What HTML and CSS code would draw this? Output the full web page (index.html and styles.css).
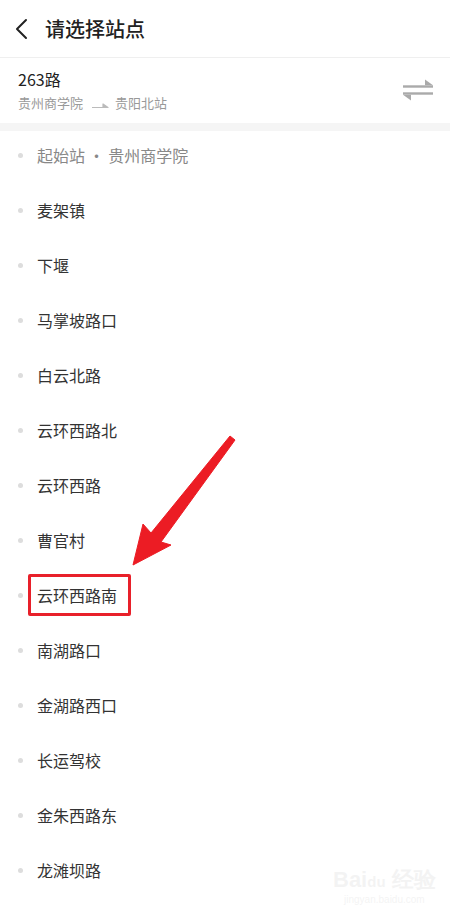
FILE: index.html
```html
<!DOCTYPE html>
<html>

<head>
    <title>请选择站点</title>
    <meta charset="utf-8">
    <meta name="viewport" content="width=device-width, initial-scale=1.0">
    <link rel="stylesheet" href="styles.css">
</head>

<body>
    <div class="page">
        <div class="header">
            <svg class="back" width="14" height="22" viewBox="0 0 14 22">
                <path d="M11 2 L2 11 L11 20" fill="none" stroke="#222" stroke-width="2" stroke-linecap="round" stroke-linejoin="round" />
            </svg>
            <h1>请选择站点</h1>
        </div>

        <div class="route">
            <div class="route-info">
                <div class="route-name">263路</div>
                <div class="route-dir">
                    <span>贵州商学院</span>
                    <svg class="dir-arrow" width="18" height="8" viewBox="0 0 18 8">
                        <path d="M1 6.5 H17 L12 3 V6.5" fill="#bbb" stroke="#bbb" stroke-width="1.2" stroke-linejoin="round" />
                    </svg>
                    <span>贵阳北站</span>
                </div>
            </div>
            <svg class="swap" width="30" height="22" viewBox="0 0 30 22">
                <path d="M0 7.5 H30" stroke="#aaa" stroke-width="2.4" />
                <path d="M22 0.5 L30 6.3 L22 6.3 Z" fill="#aaa" />
                <path d="M0 14.5 H30" stroke="#aaa" stroke-width="2.4" />
                <path d="M0 15.7 L8 15.7 L8 21.5 Z" fill="#aaa" />
            </svg>
        </div>

        <div class="band"></div>

        <ul class="stops">
            <li class="first"><span class="dot"></span>起始站 · 贵州商学院</li>
            <li><span class="dot"></span>麦架镇</li>
            <li><span class="dot"></span>下堰</li>
            <li><span class="dot"></span>马掌坡路口</li>
            <li><span class="dot"></span>白云北路</li>
            <li><span class="dot"></span>云环西路北</li>
            <li><span class="dot"></span>云环西路</li>
            <li><span class="dot"></span>曹官村</li>
            <li class="marked"><span class="dot"></span><span class="mark">云环西路南</span></li>
            <li><span class="dot"></span>南湖路口</li>
            <li><span class="dot"></span>金湖路西口</li>
            <li><span class="dot"></span>长运驾校</li>
            <li><span class="dot"></span>金朱西路东</li>
            <li><span class="dot"></span>龙滩坝路</li>
        </ul>

        <!-- annotation arrow drawn over the list -->
        <svg class="pointer" width="450" height="920" viewBox="0 0 450 920">
            <polygon points="133,565 143,524 151,533 230,436 235,440 161,542 171,545" fill="#ec1c24" stroke="#ec1c24" stroke-width="1" stroke-linejoin="round" />
        </svg>

        <div class="watermark">
            <div class="wm-logo">Bai<span class="wm-du">du</span> 经验</div>
            <div class="wm-url">jingyan.baidu.com</div>
        </div>
    </div>
</body>

</html>
```

FILE: styles.css
```css
body {
    margin: 0;
    background-color: #fff;
    font-family: "Noto Sans CJK SC", "Noto Sans", sans-serif;
    color: #222;
}

.page {
    position: relative;
    width: 450px;
    height: 920px;
    overflow: hidden;
}

.header {
    display: flex;
    align-items: center;
    height: 58px;
    padding-left: 15px;
    border-bottom: 1px solid #efefef;
    box-sizing: border-box;
}

.header .back {
    margin-right: 16px;
}

.header h1 {
    margin: 0;
    font-size: 20px;
    font-weight: 500;
    color: #222;
}

.route {
    display: flex;
    align-items: center;
    justify-content: space-between;
    height: 65px;
    padding: 0 17px 0 18px;
}

.route-name {
    font-size: 16px;
    line-height: 20px;
    color: #222;
}

.route-dir {
    display: flex;
    align-items: center;
    margin-top: 5px;
    font-size: 13px;
    line-height: 18px;
    color: #999;
}

.dir-arrow {
    margin: 4px 6px 0 8px;
}

.swap {
    margin-top: -2px;
}

.band {
    height: 8px;
    background-color: #f5f5f5;
}

.stops {
    list-style: none;
    margin: 0;
    padding: 0;
}

.stops li {
    display: flex;
    align-items: center;
    line-height: 48px;
    height: 48px;
    padding-bottom: 7px;
    padding-left: 18px;
    font-size: 16px;
    color: #333;
}

.stops li.first {
    color: #888;
}

.dot {
    width: 5px;
    height: 5px;
    border-radius: 50%;
    background-color: #ddd;
    margin-right: 14px;
    flex-shrink: 0;
}

.mark {
    display: inline-block;
    line-height: 36px;
    padding: 0 11px 0 6px;
    margin-left: -9px;
    border: 3.5px solid #e8202a;
    border-radius: 2px;
}

.pointer {
    position: absolute;
    left: 0;
    top: 0;
    pointer-events: none;
}

.watermark {
    position: absolute;
    left: 333px;
    top: 868px;
    color: #000;
    opacity: 0.045;
    font-family: "Liberation Sans", sans-serif;
    text-align: center;
}

.wm-logo {
    font-size: 22px;
    font-weight: bold;
    line-height: 24px;
}

.wm-du {
    font-size: 15px;
}

.wm-url {
    font-size: 10px;
    line-height: 12px;
}
```
